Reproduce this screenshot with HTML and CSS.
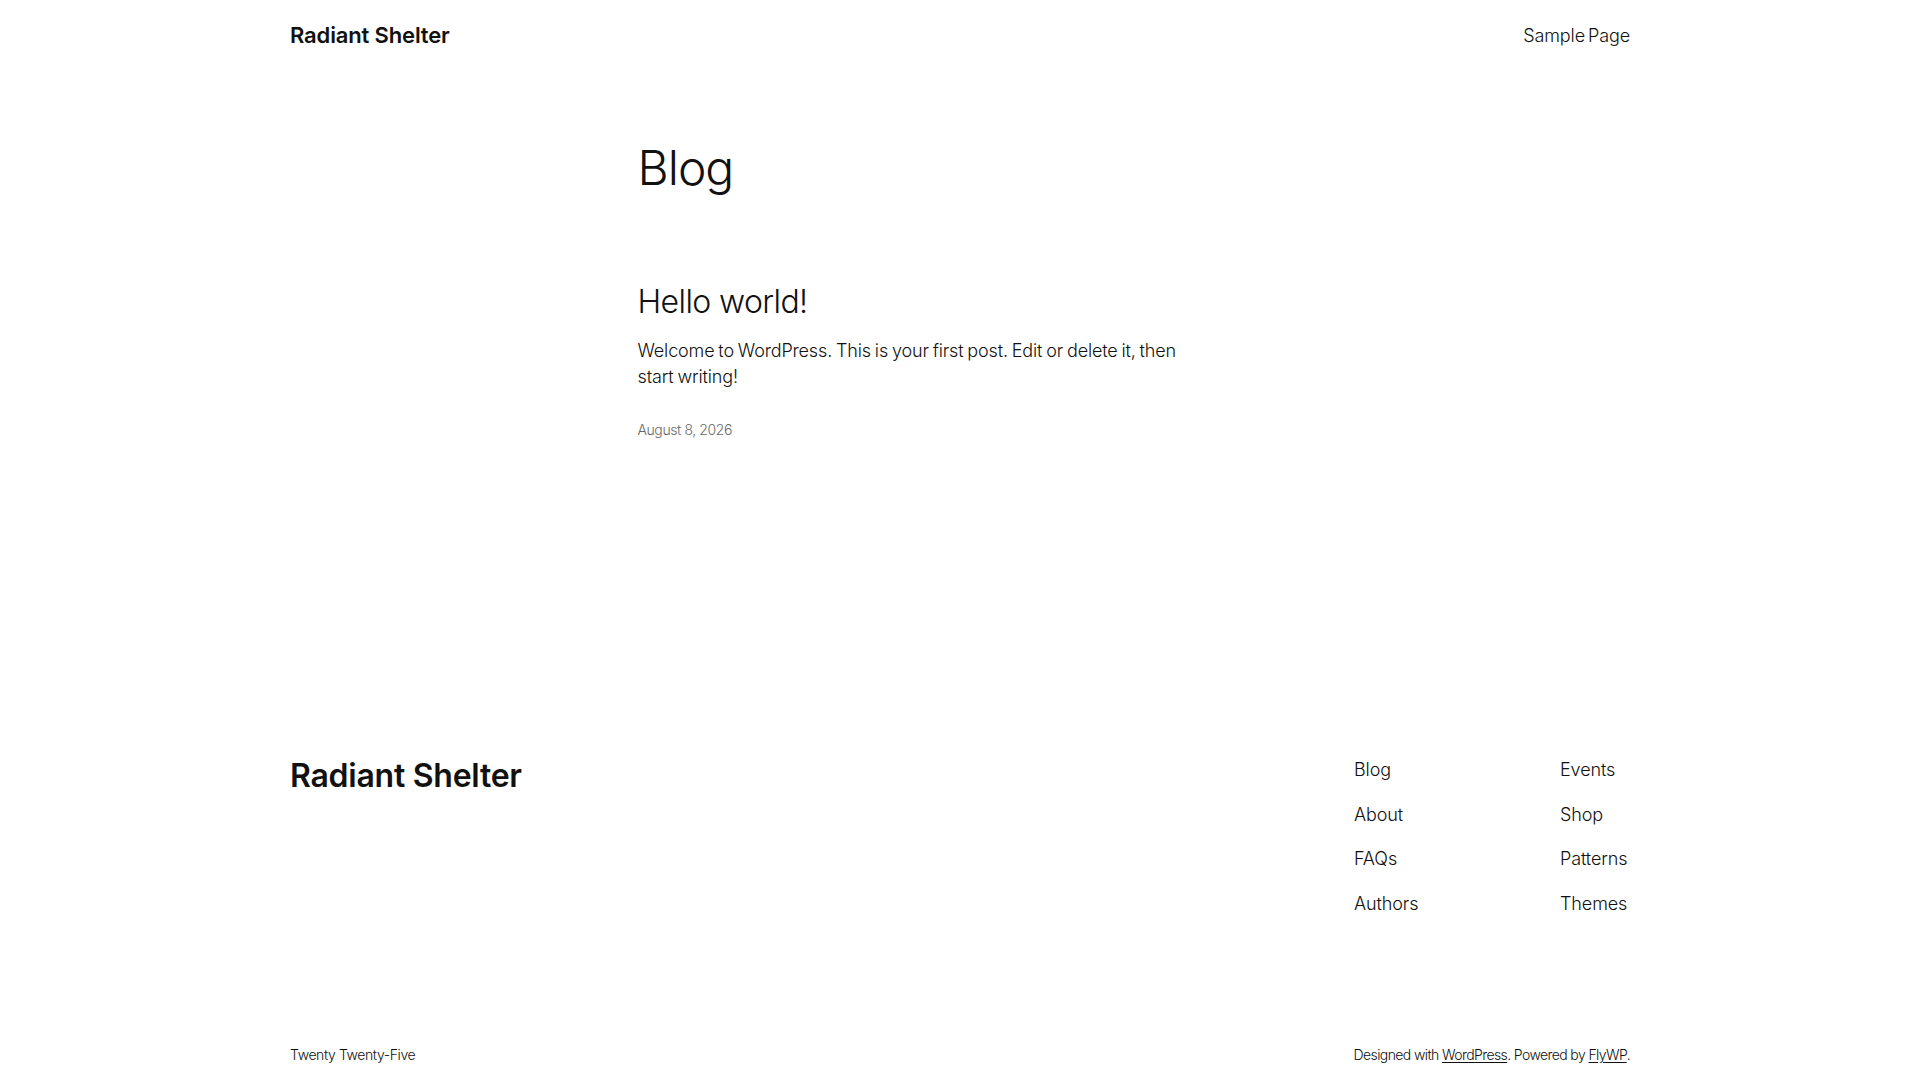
FILE: index.html
```html
<!DOCTYPE html>
<html lang="en">
<head>
<meta charset="utf-8">
<title>Blog – Radiant Shelter</title>
<link rel="stylesheet" href="styles.css">
</head>
<body>
<div class="page">
  <header class="site-header">
    <a class="site-title" href="#">Radiant Shelter</a>
    <nav class="header-nav"><a href="#">Sample Page</a></nav>
  </header>

  <main class="site-main">
    <h1 class="page-title">Blog</h1>
    <article class="post">
      <h2 class="post-title"><a href="#">Hello world!</a></h2>
      <p class="post-excerpt">Welcome to WordPress. This is your first post. Edit or delete it, then start writing!</p>
      <time class="post-date">August 8, 2026</time>
    </article>
  </main>

  <footer class="site-footer">
    <div class="footer-top">
      <a class="footer-title" href="#">Radiant Shelter</a>
      <nav class="footer-nav">
        <ul class="footer-col footer-col-left">
          <li><a href="#">Blog</a></li>
          <li><a href="#">About</a></li>
          <li><a href="#">FAQs</a></li>
          <li><a href="#">Authors</a></li>
        </ul>
        <ul class="footer-col footer-col-right">
          <li><a href="#">Events</a></li>
          <li><a href="#">Shop</a></li>
          <li><a href="#">Patterns</a></li>
          <li><a href="#">Themes</a></li>
        </ul>
      </nav>
    </div>
    <div class="footer-bottom">
      <p class="theme-name">Twenty Twenty-Five</p>
      <p class="credits">Designed with <a href="#">WordPress</a>. Powered by <a href="#">FlyWP</a>.</p>
    </div>
  </footer>
</div>
</body>
</html>
```
FILE: styles.css
```css
html, body {
  margin: 0;
  padding: 0;
  background: #ffffff;
}
body {
  font-family: "Inter", "Noto Sans", "Liberation Sans", sans-serif;
  font-weight: 300;
  color: #111111;
  letter-spacing: -0.1px;
}
a {
  color: inherit;
  text-decoration: none;
}
p, h1, h2, ul {
  margin: 0;
  padding: 0;
}
ul { list-style: none; }

.page {
  display: flex;
  flex-direction: column;
}

/* Header */
.site-header {
  width: 1340px;
  margin: 0 auto;
  padding-top: 22px;
  display: flex;
  justify-content: space-between;
  align-items: center;
}
.site-title {
  font-size: 22px;
  line-height: 26.4px;
  font-weight: 600;
  letter-spacing: -0.15px;
}
.header-nav {
  font-size: 18px;
  line-height: 25.2px;
  word-spacing: -2px;
}

/* Main */
.site-main {
  width: 645px;
  margin: 0 auto;
  padding-top: 91px;
  display: flex;
  flex-direction: column;
}
.page-title {
  font-size: 48px;
  line-height: 57.6px;
  font-weight: 300;
  letter-spacing: -1px;
}
.post {
  padding-top: 86px;
  display: flex;
  flex-direction: column;
}
.post-title {
  font-size: 32px;
  line-height: 38.4px;
  font-weight: 300;
  letter-spacing: -0.6px;
}
.post-excerpt {
  margin-top: 17px;
  font-size: 18px;
  line-height: 25.2px;
  letter-spacing: -0.15px;
  word-spacing: -1px;
  max-width: 565px;
}
.post-date {
  margin-top: 31px;
  font-size: 14px;
  line-height: 19.6px;
  letter-spacing: -0.4px;
  color: #686868;
}

/* Footer */
.site-footer {
  width: 1340px;
  margin: 0 auto;
  padding-top: 318px;
  display: flex;
  flex-direction: column;
}
.footer-top {
  display: flex;
  justify-content: space-between;
  align-items: flex-start;
}
.footer-title {
  font-size: 32px;
  line-height: 38.4px;
  font-weight: 600;
  letter-spacing: -0.25px;
}
.footer-nav {
  display: flex;
  font-size: 18px;
  line-height: 25.2px;
}
.footer-col {
  display: flex;
  flex-direction: column;
  gap: 19.3px;
}
.footer-col-left { width: 206px; }
.footer-col-right { width: 70px; }

.footer-bottom {
  margin-top: 129px;
  padding-bottom: 16px;
  display: flex;
  justify-content: space-between;
  font-size: 14px;
  line-height: 19.6px;
  letter-spacing: -0.4px;
}
.credits {
  letter-spacing: -0.6px;
}
.credits a {
  text-decoration: underline;
  text-underline-offset: 2px;
}
```
